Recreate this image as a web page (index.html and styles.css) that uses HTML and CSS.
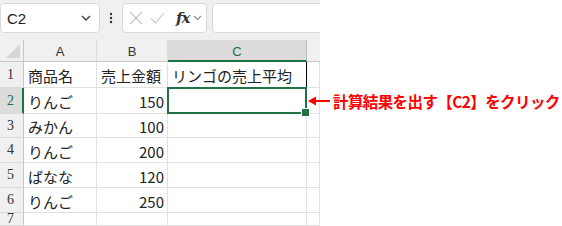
FILE: index.html
```html
<!DOCTYPE html>
<html lang="ja">
<head>
    <meta charset="UTF-8">
    <title>売上平均</title>
    <link rel="stylesheet" href="styles.css">
</head>
<body>
    <div class="page">
        <div class="excel">
            <div class="toolbar">
                <div class="namebox">
                    <span class="namebox-text">C2</span>
                    <svg class="chevron" width="10" height="6" viewBox="0 0 10 6"><path d="M1 1 L5 5 L9 1" fill="none" stroke="#404040" stroke-width="1.3"/></svg>
                </div>
                <svg class="dots" width="4" height="12" viewBox="0 0 4 12">
                    <circle cx="2" cy="2" r="1.2" fill="#333"/>
                    <circle cx="2" cy="6" r="1.2" fill="#333"/>
                    <circle cx="2" cy="10" r="1.2" fill="#333"/>
                </svg>
                <div class="fx-box">
                    <svg width="14" height="14" viewBox="0 0 14 14"><path d="M1 1 L13 13 M13 1 L1 13" stroke="#c4c4c4" stroke-width="1.1"/></svg>
                    <svg width="15" height="14" viewBox="0 0 15 14"><path d="M1 7.5 L5.5 12 L14 2" fill="none" stroke="#c4c4c4" stroke-width="1.1"/></svg>
                    <span class="fx">fx</span>
                    <svg width="9" height="6" viewBox="0 0 9 6"><path d="M1 1 L4.5 4.5 L8 1" fill="none" stroke="#8a8a8a" stroke-width="1.1"/></svg>
                </div>
                <div class="formula"></div>
            </div>

            <div class="sheet">
                <div class="corner"></div>
                <div class="col-head">A</div>
                <div class="col-head">B</div>
                <div class="col-head active">C</div>
                <div class="col-head last"></div>

                <div class="row-head">1</div>
                <div class="cell">商品名</div>
                <div class="cell">売上金額</div>
                <div class="cell edge">リンゴの売上平均</div>
                <div class="cell"></div>

                <div class="row-head active">2</div>
                <div class="cell">りんご</div>
                <div class="cell num">150</div>
                <div class="cell selected"></div>
                <div class="cell"></div>

                <div class="row-head">3</div>
                <div class="cell">みかん</div>
                <div class="cell num">100</div>
                <div class="cell"></div>
                <div class="cell"></div>

                <div class="row-head">4</div>
                <div class="cell">りんご</div>
                <div class="cell num">200</div>
                <div class="cell"></div>
                <div class="cell"></div>

                <div class="row-head">5</div>
                <div class="cell">ばなな</div>
                <div class="cell num">120</div>
                <div class="cell"></div>
                <div class="cell"></div>

                <div class="row-head">6</div>
                <div class="cell">りんご</div>
                <div class="cell num">250</div>
                <div class="cell"></div>
                <div class="cell"></div>

                <div class="row-head">7</div>
                <div class="cell"></div>
                <div class="cell"></div>
                <div class="cell"></div>
                <div class="cell"></div>
            </div>
        </div>

        <!-- annotation pointing at C2 -->
        <div class="note">
            <svg class="arrow" width="24" height="10" viewBox="0 0 24 10">
                <path d="M5 5 H22" stroke="#ff0000" stroke-width="2"/>
                <path d="M0 5 L8 0.5 L8 9.5 Z" fill="#ff0000"/>
            </svg>
            <span class="note-text">計算結果を出す【C2】をクリック</span>
        </div>
    </div>
</body>
</html>
```

FILE: styles.css
```css
* {
    margin: 0;
    padding: 0;
    box-sizing: border-box;
}

body {
    background: #fff;
    font-family: "Noto Sans CJK JP", "Noto Sans", sans-serif;
    color: #222;
    overflow: hidden;
}

.page {
    position: relative;
    width: 562px;
    height: 226px;
}

.excel {
    width: 320px;
    overflow: hidden;
}

/* formula bar */
.toolbar {
    display: flex;
    align-items: flex-start;
    height: 40px;
    padding-top: 3px;
    background: #f0f0f0;
}

.namebox {
    display: flex;
    align-items: center;
    justify-content: space-between;
    width: 100px;
    height: 30px;
    padding: 0 8px 0 6px;
    background: #fff;
    border: 1px solid #d9d9d9;
    border-radius: 4px;
}

.namebox-text {
    font-family: "Liberation Sans", Arial, sans-serif;
    font-size: 15px;
    color: #222;
}

.dots {
    margin: 9px 0 0 9px;
}

.fx-box {
    display: flex;
    align-items: center;
    gap: 7px;
    width: 85px;
    height: 30px;
    margin-left: 9px;
    padding-left: 6px;
    background: #fff;
    border: 1px solid #d9d9d9;
    border-radius: 4px;
}

.fx {
    font-family: "DejaVu Serif", "Liberation Serif", serif;
    font-style: italic;
    font-weight: bold;
    font-size: 15px;
    color: #333;
    margin-left: 4px;
    margin-right: -3px;
    letter-spacing: -1px;
}

.formula {
    flex: 1;
    height: 30px;
    margin-left: 5px;
    margin-right: -6px;
    background: #fff;
    border: 1px solid #d9d9d9;
    border-radius: 4px;
}

/* grid */
.sheet {
    display: grid;
    grid-template-columns: 24px 73px 71px 139px 13px;
    grid-template-rows: 22px 26px 26px 24px 25px 25px 25px 13px;
}

.corner {
    position: relative;
    background: #f0f0f0;
    border-right: 1px solid #c8c8c8;
    border-bottom: 1px solid #c8c8c8;
}

.corner::after {
    content: '';
    position: absolute;
    right: 3px;
    bottom: 3px;
    width: 14px;
    height: 14px;
    background: #d6d6d6;
    clip-path: polygon(100% 0, 100% 100%, 0 100%);
}

.col-head {
    display: flex;
    align-items: center;
    justify-content: center;
    background: #f0f0f0;
    border-right: 1px solid #dadada;
    border-bottom: 1px solid #c8c8c8;
    font-family: "Liberation Sans", Arial, sans-serif;
    font-size: 13px;
    color: #333;
    padding-top: 2px;
}

.col-head.active {
    background: #dcdcdc;
    color: #1e6b41;
    border-right: 1px solid #bdbdbd;
    border-bottom: 2px solid #217346;
}

.col-head.last {
    border-right: none;
}

.row-head {
    display: flex;
    align-items: center;
    padding-left: 7px;
    background: #f0f0f0;
    border-right: 1px solid #c8c8c8;
    border-bottom: 1px solid #dadada;
    font-family: "Liberation Serif", serif;
    font-size: 14px;
    color: #333;
}

.row-head.active {
    background: #dcdcdc;
    color: #1e6b41;
    border-right: 2px solid #217346;
}

.cell {
    display: flex;
    align-items: center;
    padding: 2px 0 0 4px;
    border-right: 1px solid #e1e1e1;
    border-bottom: 1px solid #e1e1e1;
    font-size: 15px;
    color: #222;
    white-space: nowrap;
}

.cell.num {
    justify-content: flex-end;
    padding: 2px 3px 0 0;
}

.cell.edge {
    border-right: 1px solid #000;
}

.cell.selected {
    position: relative;
}

.cell.selected::before {
    content: '';
    position: absolute;
    left: -1px;
    top: -1px;
    right: -1px;
    bottom: -1px;
    border: 2px solid #217346;
}

.cell.selected::after {
    content: '';
    position: absolute;
    right: -4px;
    bottom: -4px;
    width: 7px;
    height: 7px;
    background: #217346;
    border: 1px solid #fff;
}

/* annotation */
.note {
    position: absolute;
    left: 308px;
    top: 90px;
    display: flex;
    align-items: center;
    gap: 1px;
}

.note-text {
    font-size: 15.5px;
    font-weight: bold;
    color: #ff0000;
    letter-spacing: -0.6px;
    white-space: nowrap;
}
```
